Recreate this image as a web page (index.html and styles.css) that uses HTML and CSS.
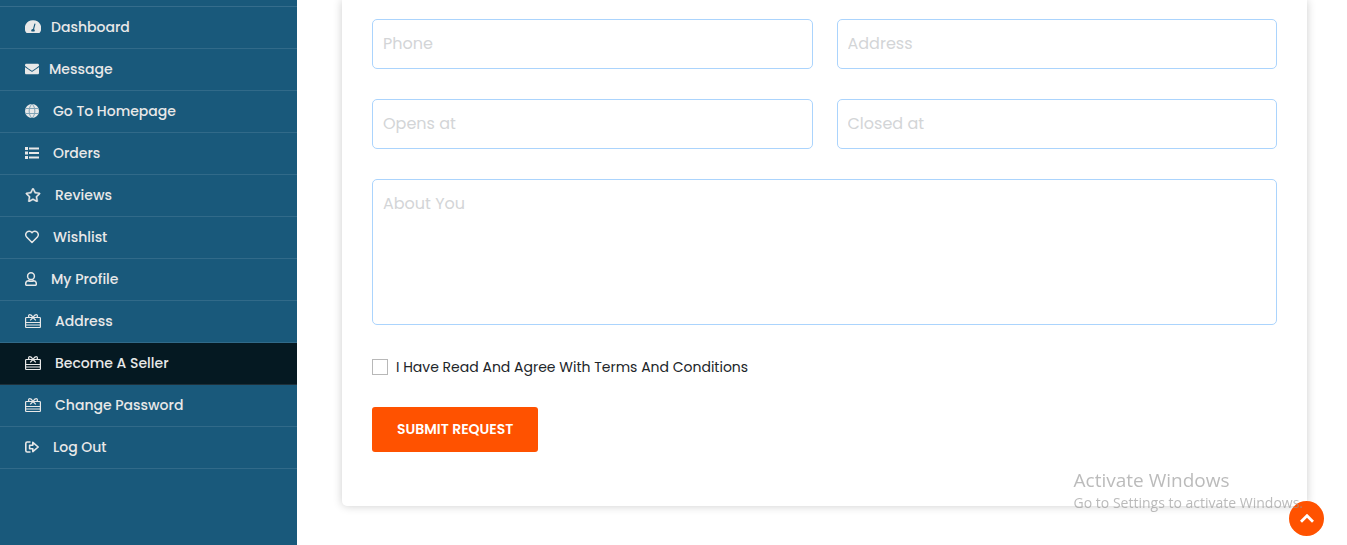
FILE: index.html
```html
<!DOCTYPE html>
<html lang="en">
<head>
<meta charset="utf-8">
<title>Become A Seller</title>
<meta name="viewport" content="width=device-width, initial-scale=1">
<link rel="stylesheet" href="styles.css">
</head>
<body>
<svg class="sprite" aria-hidden="true">
  <symbol id="gift-card" viewBox="0 0 16 14">
    <g fill="none" stroke="currentColor" stroke-width="1.200">
      <rect x=".6" y="3.500" width="14.800" height="10" rx=".8"/>
      <path d="M.6 8.500h14.800M.6 11h14.800"/>
      <path stroke-linejoin="round" d="M4.500 3.500C3 2.800 3.300.6 4.800.6 6 .6 7 1.500 8 3.500 9 1.500 10 .6 11.200.6 12.700.6 13 2.800 11.500 3.500M8 3.500L5.200 6.300M8 3.500L10.800 6.300"/>
    </g>
  </symbol>
</svg>
<div class="layout">
  <nav class="sidebar" aria-label="Account">
    <ul class="menu">
      <li><a class="menu-link" href="#"><svg class="icon icon-lg icon-tight" viewBox="0 0 16 14"><path fill="currentColor" fill-rule="evenodd" d="M8 .2A8 8 0 0 0 1.100 12.600l.6.400h12.600l.6-.4A8 8 0 0 0 8 .2zM10 3.400a.6.600 0 0 1 .4.800L9.100 9.200a1.700 1.700 0 0 1 .3 2.300H6.600a1.600 1.600 0 0 1 1.400-2.600L9.300 3.900a.6.600 0 0 1 .7-.5z"/></svg>Dashboard</a></li>
      <li><a class="menu-link" href="#"><svg class="icon icon-tight" viewBox="0 0 512 512"><path fill="currentColor" d="M502.300 190.800c3.900-3.100 9.700-.2 9.700 4.700V400c0 26.500-21.500 48-48 48H48c-26.500 0-48-21.500-48-48V195.600c0-5 5.700-7.800 9.700-4.700 22.400 17.400 52.100 39.500 154.100 113.600 21.100 15.400 56.700 47.800 92.200 47.600 35.700.3 72-32.800 92.300-47.600 102-74.100 131.600-96.300 154-113.700zM256 320c23.200.4 56.600-29.200 73.400-41.400 132.700-96.300 142.800-104.700 173.400-128.700 5.800-4.500 9.200-11.500 9.200-18.900v-19c0-26.500-21.500-48-48-48H48c-26.500 0-48 21.500-48 48v19c0 7.400 3.400 14.300 9.200 18.900 30.600 23.900 40.700 32.400 173.400 128.700 16.800 12.200 50.200 41.800 73.400 41.400z"/></svg>Message</a></li>
      <li><a class="menu-link" href="#"><svg class="icon" viewBox="0 0 14 14"><circle cx="7" cy="7" r="7" fill="currentColor"/><path class="globe-lines" fill="none" d="M0 4.500h14M0 9.500h14M7 0C3.200 3 3.200 11 7 14M7 0c3.800 3 3.800 11 0 14"/></svg>Go To Homepage</a></li>
      <li><a class="menu-link" href="#"><svg class="icon" viewBox="0 0 14 14"><path fill="currentColor" d="M0 1h3v3H0zM0 5.500h3v3H0zM0 10h3v3H0zM4 1.500h10v2H4zM4 6h10v2H4zM4 10.500h10v2H4z"/></svg>Orders</a></li>
      <li><a class="menu-link" href="#"><svg class="icon icon-lg" viewBox="0 0 576 512"><path fill="currentColor" stroke="currentColor" stroke-width="12" d="M528.100 171.500L382 150.200 316.700 17.800c-11.700-23.600-45.600-23.900-57.400 0L194 150.200 47.900 171.500c-26.200 3.800-36.700 36.100-17.700 54.600l105.700 103-25 145.500c-4.500 26.300 23.200 46 46.400 33.700L288 439.600l130.700 68.700c23.200 12.200 50.900-7.400 46.400-33.700l-25-145.500 105.700-103c19-18.500 8.500-50.800-17.700-54.600zM388.600 312.300l23.700 138.400L288 385.400l-124.300 65.300 23.700-138.400-100.600-98 139-20.200 62.200-126 62.200 126 139 20.200-100.600 98z"/></svg>Reviews</a></li>
      <li><a class="menu-link" href="#"><svg class="icon" viewBox="0 0 14 14"><path fill="none" stroke="currentColor" stroke-width="1.500" stroke-linejoin="round" d="M7 2.700C5.500.8 3.300.9 2 2 .4 3.400.3 5.500 1.600 6.900L7 12.500l5.400-5.600c1.300-1.400 1.200-3.500-.4-4.900C10.700.9 8.500.8 7 2.700z"/></svg>Wishlist</a></li>
      <li><a class="menu-link" href="#"><svg class="icon icon-sm" viewBox="0 0 12 14"><g fill="none" stroke="currentColor" stroke-width="1.500" stroke-linejoin="round"><circle cx="6" cy="4.200" r="3.400"/><path d="M3.300 8.800C1.600 9 .7 10.200.7 11.500v.8c0 .6.400 1 1 1h8.600c.6 0 1-.4 1-1v-.8c0-1.300-.9-2.500-2.600-2.700-1.700.7-3.700.7-5.400 0z"/></g></svg>My Profile</a></li>
      <li><a class="menu-link" href="#"><svg class="icon icon-lg"><use href="#gift-card"/></svg>Address</a></li>
      <li><a class="menu-link is-active" href="#" aria-current="page"><svg class="icon icon-lg"><use href="#gift-card"/></svg>Become A Seller</a></li>
      <li><a class="menu-link" href="#"><svg class="icon icon-lg"><use href="#gift-card"/></svg>Change Password</a></li>
      <li><a class="menu-link" href="#"><svg class="icon" viewBox="0 0 14 14"><path fill="none" stroke="currentColor" stroke-width="1.600" stroke-linejoin="round" d="M5.500 2H2.200C1.300 2 .8 2.500.8 3.400v7.200c0 .9.500 1.400 1.400 1.400h3.300M4.600 5.200h3.200V2.400L13.200 7l-5.400 4.600V8.800H4.600z"/></svg>Log Out</a></li>
    </ul>
  </nav>
  <main class="content">
    <form class="card">
      <div class="fields">
        <input class="field" type="text" placeholder="Phone" aria-label="Phone">
        <input class="field" type="text" placeholder="Address" aria-label="Address">
        <input class="field" type="text" placeholder="Opens at" aria-label="Opens at">
        <input class="field" type="text" placeholder="Closed at" aria-label="Closed at">
        <textarea class="field field-area" placeholder="About You" aria-label="About You"></textarea>
      </div>
      <div class="agree">
        <input class="agree-box" type="checkbox" id="agree">
        <label for="agree">I Have Read And Agree With Terms And Conditions</label>
      </div>
      <button class="submit" type="submit">SUBMIT REQUEST</button>
    </form>
  </main>
</div>
<button class="to-top" type="button" aria-label="Back to top"><svg class="to-top-icon" viewBox="0 0 14 10"><path fill="none" stroke="currentColor" stroke-width="2.800" d="M1 7.700l6-6 6 6"/></svg></button>
<div class="watermark">
  <div class="watermark-title">Activate Windows</div>
  <div class="watermark-text">Go to Settings to activate Windows.</div>
</div>
</body>
</html>
```

FILE: styles.css
```css
* {
  box-sizing: border-box;
}

body {
  margin: 0;
  background: #fff;
  color: #212529;
  font-family: Poppins, Inter, sans-serif;
  font-size: 14px;
}

.sprite {
  position: absolute;
  width: 0;
  height: 0;
}

.layout {
  display: flex;
  min-height: 100vh;
}

/* Sidebar */
.sidebar {
  flex: 0 0 297px;
  padding-top: 6px;
  background: #19597b;
}

.menu {
  margin: 0;
  padding: 0;
  list-style: none;
  border-top: 1px solid #356d8c;
}

.menu-link {
  display: flex;
  align-items: center;
  height: 42px;
  padding: 0 25px;
  border-bottom: 1px solid #316a89;
  color: #e8e8e8;
  font-weight: 500;
  font-size: 14px;
  text-decoration: none;
}

.menu-link.is-active {
  background: #051922;
  border-bottom-color: #1e303a;
}

.icon {
  flex: none;
  width: 14px;
  height: 14px;
  margin-right: 14px;
  margin-bottom: 1px;
}

.icon-lg {
  width: 16px;
}

.icon-sm {
  width: 12px;
}

.icon-tight {
  margin-right: 10px;
}

.globe-lines {
  stroke: #7fa3b6;
  stroke-width: 1;
}

/* Form */
.content {
  flex: 1;
  min-width: 0;
  padding: 0 40px 39px 45px;
}

.card {
  padding: 19px 30px 54px;
  border-radius: 0 0 5px 5px;
  background: #fff;
  box-shadow: 0 0 10px rgba(0, 0, 0, 0.2);
}

.fields {
  display: grid;
  grid-template-columns: 1fr 1fr;
  gap: 30px 24px;
}

.field {
  width: 100%;
  min-width: 0;
  height: 50px;
  padding: 0 10px 2px;
  border: 1px solid #abd4fd;
  border-radius: 5px;
  background: #fff;
  color: #212529;
  font-family: inherit;
  font-size: 16px;
}

.field::placeholder {
  color: #d3d5d7;
  opacity: 1;
}

.field-area {
  grid-column: 1 / -1;
  height: 146px;
  padding: 12px 10px;
  line-height: 24px;
  resize: none;
}

.agree {
  display: flex;
  align-items: center;
  gap: 8px;
  margin-top: 32px;
  line-height: 20px;
}

.agree-box {
  appearance: none;
  width: 16px;
  height: 16px;
  margin: 0;
  border: 1px solid #b8b8b8;
  background: #fff;
}

.agree-box:checked {
  background: #ff5200;
}

.submit {
  height: 45px;
  margin-top: 30px;
  padding: 0 25px;
  border: 0;
  border-radius: 3px;
  background: #ff5200;
  color: #fff;
  font-family: inherit;
  font-size: 14px;
  font-weight: 600;
}

/* Floating items */
.to-top {
  position: fixed;
  right: 23px;
  bottom: 9px;
  display: flex;
  align-items: center;
  justify-content: center;
  width: 35px;
  height: 35px;
  padding: 0;
  border: 0;
  border-radius: 50%;
  background: #ff5200;
  color: #fff;
}

.to-top-icon {
  width: 14px;
  height: 10px;
}

.watermark {
  position: fixed;
  right: 44px;
  bottom: 32px;
  color: rgba(150, 150, 150, 0.65);
  font-family: "Segoe UI", "Open Sans", sans-serif;
  pointer-events: none;
}

.watermark-title {
  font-size: 19px;
  line-height: 26px;
}

.watermark-text {
  font-size: 14px;
  line-height: 20px;
}
```
